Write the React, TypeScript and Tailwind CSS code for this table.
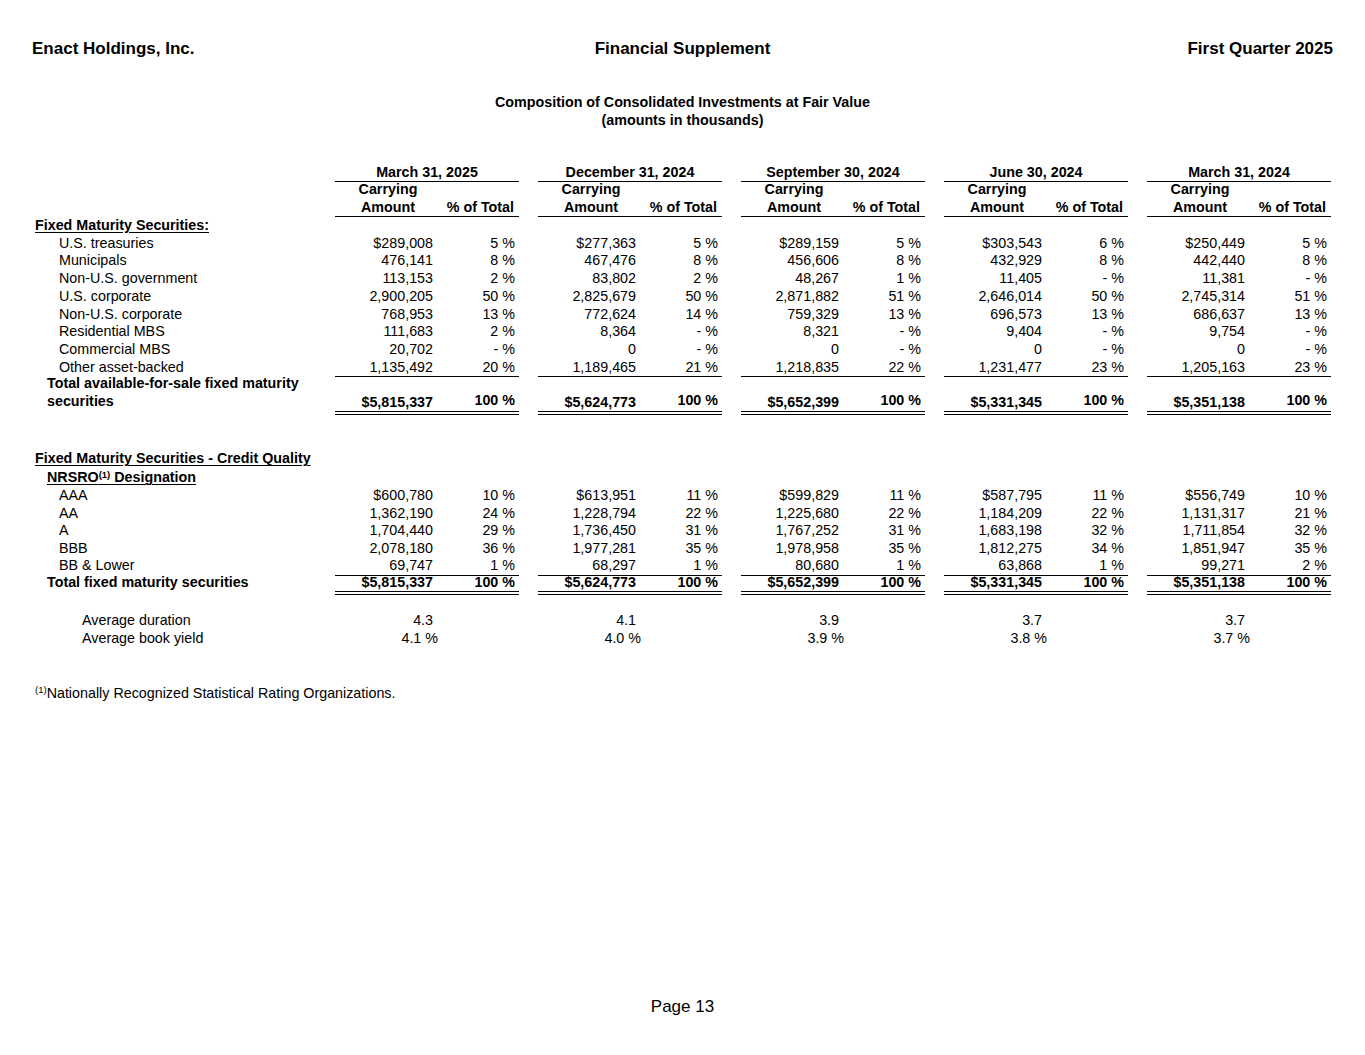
import React from 'react'

type Pair = [string, string]

interface Period {
  date: string
  rows: Pair[]
  total: Pair
  credit: Pair[]
  creditTotal: Pair
  duration: string
  yieldPct: string
}

const periods: Period[] = [
  {
    date: 'March 31, 2025',
    rows: [
      ['$289,008', '5 %'],
      ['476,141', '8 %'],
      ['113,153', '2 %'],
      ['2,900,205', '50 %'],
      ['768,953', '13 %'],
      ['111,683', '2 %'],
      ['20,702', '- %'],
      ['1,135,492', '20 %'],
    ],
    total: ['$5,815,337', '100 %'],
    credit: [
      ['$600,780', '10 %'],
      ['1,362,190', '24 %'],
      ['1,704,440', '29 %'],
      ['2,078,180', '36 %'],
      ['69,747', '1 %'],
    ],
    creditTotal: ['$5,815,337', '100 %'],
    duration: '4.3',
    yieldPct: '4.1 %',
  },
  {
    date: 'December 31, 2024',
    rows: [
      ['$277,363', '5 %'],
      ['467,476', '8 %'],
      ['83,802', '2 %'],
      ['2,825,679', '50 %'],
      ['772,624', '14 %'],
      ['8,364', '- %'],
      ['0', '- %'],
      ['1,189,465', '21 %'],
    ],
    total: ['$5,624,773', '100 %'],
    credit: [
      ['$613,951', '11 %'],
      ['1,228,794', '22 %'],
      ['1,736,450', '31 %'],
      ['1,977,281', '35 %'],
      ['68,297', '1 %'],
    ],
    creditTotal: ['$5,624,773', '100 %'],
    duration: '4.1',
    yieldPct: '4.0 %',
  },
  {
    date: 'September 30, 2024',
    rows: [
      ['$289,159', '5 %'],
      ['456,606', '8 %'],
      ['48,267', '1 %'],
      ['2,871,882', '51 %'],
      ['759,329', '13 %'],
      ['8,321', '- %'],
      ['0', '- %'],
      ['1,218,835', '22 %'],
    ],
    total: ['$5,652,399', '100 %'],
    credit: [
      ['$599,829', '11 %'],
      ['1,225,680', '22 %'],
      ['1,767,252', '31 %'],
      ['1,978,958', '35 %'],
      ['80,680', '1 %'],
    ],
    creditTotal: ['$5,652,399', '100 %'],
    duration: '3.9',
    yieldPct: '3.9 %',
  },
  {
    date: 'June 30, 2024',
    rows: [
      ['$303,543', '6 %'],
      ['432,929', '8 %'],
      ['11,405', '- %'],
      ['2,646,014', '50 %'],
      ['696,573', '13 %'],
      ['9,404', '- %'],
      ['0', '- %'],
      ['1,231,477', '23 %'],
    ],
    total: ['$5,331,345', '100 %'],
    credit: [
      ['$587,795', '11 %'],
      ['1,184,209', '22 %'],
      ['1,683,198', '32 %'],
      ['1,812,275', '34 %'],
      ['63,868', '1 %'],
    ],
    creditTotal: ['$5,331,345', '100 %'],
    duration: '3.7',
    yieldPct: '3.8 %',
  },
  {
    date: 'March 31, 2024',
    rows: [
      ['$250,449', '5 %'],
      ['442,440', '8 %'],
      ['11,381', '- %'],
      ['2,745,314', '51 %'],
      ['686,637', '13 %'],
      ['9,754', '- %'],
      ['0', '- %'],
      ['1,205,163', '23 %'],
    ],
    total: ['$5,351,138', '100 %'],
    credit: [
      ['$556,749', '10 %'],
      ['1,131,317', '21 %'],
      ['1,711,854', '32 %'],
      ['1,851,947', '35 %'],
      ['99,271', '2 %'],
    ],
    creditTotal: ['$5,351,138', '100 %'],
    duration: '3.7',
    yieldPct: '3.7 %',
  },
]

const securityLabels = [
  'U.S. treasuries',
  'Municipals',
  'Non-U.S. government',
  'U.S. corporate',
  'Non-U.S. corporate',
  'Residential MBS',
  'Commercial MBS',
  'Other asset-backed',
]

const creditLabels = ['AAA', 'AA', 'A', 'BBB', 'BB & Lower']

// one period: amount column + % column
const Cell = ({ amount, pct, className = '' }: { amount: string; pct: string; className?: string }) => (
  <div className={`flex w-[184px] ${className}`}>
    <div className="w-[106px] pr-[8px] text-right">{amount}</div>
    <div className="w-[78px] pr-[4px] text-right">{pct}</div>
  </div>
)

const Groups = ({ children }: { children: React.ReactNode }) => (
  <div className="flex gap-[19px]">{children}</div>
)

export default function App() {
  return (
    <div className="flex h-[1055px] w-[1365px] flex-col bg-white font-['Liberation_Sans',Arial,sans-serif] text-[14.3px] text-black">
      {/* page header */}
      <div className="grid grid-cols-3 px-[32px] pt-[39px] text-[17px] font-bold leading-[20px]">
        <div>Enact Holdings, Inc.</div>
        <div className="text-center">Financial Supplement</div>
        <div className="text-right">First Quarter 2025</div>
      </div>

      <div className="mt-[34px] text-center font-bold leading-[18px]">
        <div>Composition of Consolidated Investments at Fair Value</div>
        <div>(amounts in thousands)</div>
      </div>

      {/* column headers */}
      <div className="mt-[35px] font-bold">
        <div className="flex">
          <div className="w-[335px] shrink-0" />
          <Groups>
            {periods.map((p) => (
              <div key={p.date} className="w-[184px] border-b-[1.5px] border-black text-center leading-[17px]">
                {p.date}
              </div>
            ))}
          </Groups>
        </div>
        <div className="flex">
          <div className="w-[335px] shrink-0" />
          <Groups>
            {periods.map((p) => (
              <div key={p.date} className="flex w-[184px] leading-[15px]">
                <div className="w-[106px] text-center">Carrying</div>
              </div>
            ))}
          </Groups>
        </div>
        <div className="flex">
          <div className="w-[335px] shrink-0" />
          <Groups>
            {periods.map((p) => (
              <div key={p.date} className="flex w-[184px] border-b-[1.5px] border-black pt-[1px] leading-[18px]">
                <div className="w-[106px] text-center">Amount</div>
                <div className="w-[78px] pr-[5px] text-right">% of Total</div>
              </div>
            ))}
          </Groups>
        </div>
      </div>

      {/* fixed maturity securities */}
      <div className="leading-[17.7px]">
        <div className="pl-[35px] font-bold underline underline-offset-2">Fixed Maturity Securities:</div>
        {securityLabels.map((label, i) => (
          <div key={label} className="flex">
            <div className="w-[335px] shrink-0 pl-[59px]">{label}</div>
            <Groups>
              {periods.map((p) => (
                <Cell
                  key={p.date}
                  amount={p.rows[i][0]}
                  pct={p.rows[i][1]}
                  className={i === securityLabels.length - 1 ? 'border-b-[1.5px] border-black' : ''}
                />
              ))}
            </Groups>
          </div>
        ))}
        <div className="flex h-[38px] font-bold">
          <div className="-mt-[3px] w-[335px] shrink-0 pl-[47px] leading-[18px]">
            Total available-for-sale fixed maturity
            <br />
            securities
          </div>
          <Groups>
            {periods.map((p) => (
              <div key={p.date} className="flex h-full w-[184px] items-end border-b-4 border-double border-black leading-[18px]">
                <div className="w-[106px] pr-[8px] text-right">{p.total[0]}</div>
                <div className="w-[78px] pb-[2px] pr-[4px] text-right">{p.total[1]}</div>
              </div>
            ))}
          </Groups>
        </div>
      </div>

      {/* credit quality */}
      <div className="mt-[34px] font-bold leading-[18px]">
        <div className="pl-[35px] underline underline-offset-2">Fixed Maturity Securities - Credit Quality</div>
        <div className="mt-[1px] pl-[47px] underline underline-offset-2">
          NRSRO<sup className="text-[9.5px]">(1)</sup> Designation
        </div>
      </div>
      <div className="mt-[1px] leading-[17.5px]">
        {creditLabels.map((label, i) => (
          <div key={label} className="flex">
            <div className="w-[335px] shrink-0 pl-[59px]">{label}</div>
            <Groups>
              {periods.map((p) => (
                <Cell
                  key={p.date}
                  amount={p.credit[i][0]}
                  pct={p.credit[i][1]}
                  className={i === creditLabels.length - 1 ? 'border-b-[1.5px] border-black' : ''}
                />
              ))}
            </Groups>
          </div>
        ))}
        <div className="flex h-[19px] font-bold leading-[13px]">
          <div className="w-[335px] shrink-0 pl-[47px]">Total fixed maturity securities</div>
          <Groups>
            {periods.map((p) => (
              <div key={p.date} className="flex h-full w-[184px] border-b-4 border-double border-black">
                <div className="w-[106px] pr-[8px] text-right">{p.creditTotal[0]}</div>
                <div className="w-[78px] pr-[4px] text-right">{p.creditTotal[1]}</div>
              </div>
            ))}
          </Groups>
        </div>
      </div>

      {/* averages */}
      <div className="mt-[16px] leading-[18px]">
        <div className="flex">
          <div className="w-[335px] shrink-0 pl-[82px]">Average duration</div>
          <Groups>
            {periods.map((p) => (
              <div key={p.date} className="flex w-[184px]">
                <div className="w-[106px] pr-[8px] text-right">{p.duration}</div>
              </div>
            ))}
          </Groups>
        </div>
        <div className="flex">
          <div className="w-[335px] shrink-0 pl-[82px]">Average book yield</div>
          <Groups>
            {periods.map((p) => (
              <div key={p.date} className="flex w-[184px]">
                <div className="w-[106px] pr-[3px] text-right">{p.yieldPct}</div>
              </div>
            ))}
          </Groups>
        </div>
      </div>

      <div className="mt-[37px] pl-[35px] leading-[18px]">
        <sup className="text-[9.5px]">(1)</sup>Nationally Recognized Statistical Rating Organizations.
      </div>

      <div className="mt-auto pb-[38px] text-center text-[17px] leading-[20px]">Page 13</div>
    </div>
  )
}
